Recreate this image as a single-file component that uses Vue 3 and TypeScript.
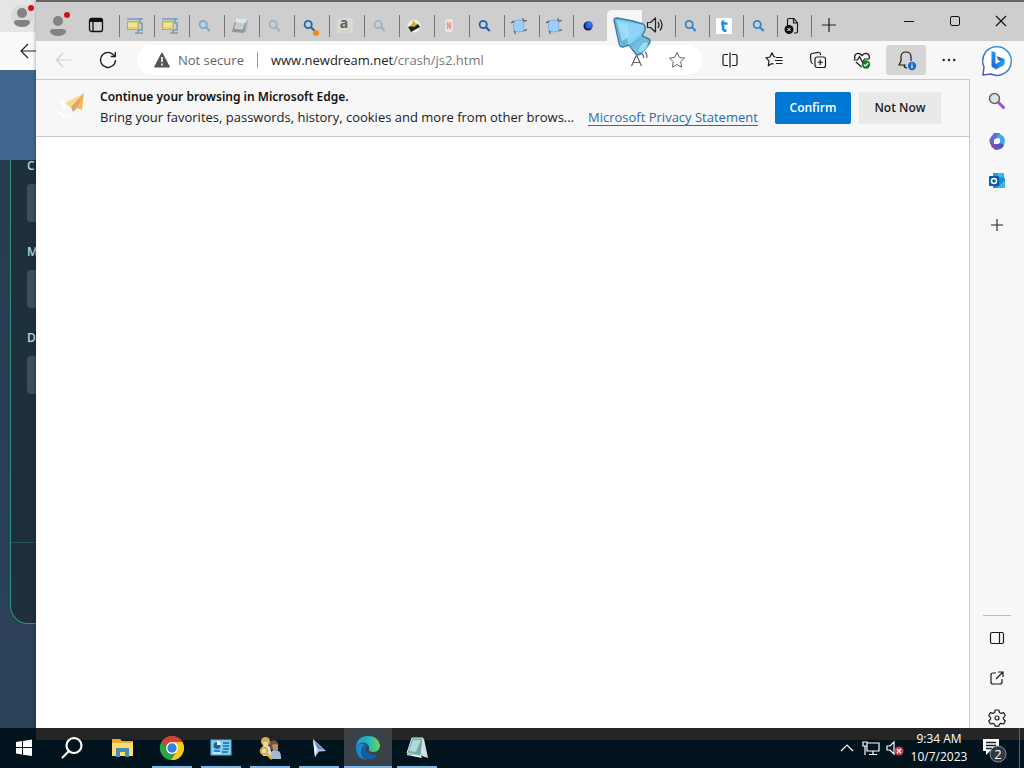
<script setup lang="ts">
interface Tab {
  icon: string
  title: string
  kind?: 'narrow' | 'active'
}

const tabs: Tab[] = [
  { icon: 'zip', title: 'Archive' },
  { icon: 'zip', title: 'Archive' },
  { icon: 'lensPale', title: 'Search' },
  { icon: 'box', title: 'Package' },
  { icon: 'lensGrey', title: 'Search' },
  { icon: 'lensDot', title: 'Search' },
  { icon: 'amazon', title: 'Shop' },
  { icon: 'lensGrey', title: 'Search' },
  { icon: 'lamp', title: 'Lamp' },
  { icon: 'card', title: 'Card' },
  { icon: 'lensDeep', title: 'Search' },
  { icon: 'scroll', title: 'Script' },
  { icon: 'scroll', title: 'Script', kind: 'narrow' },
  { icon: 'orb', title: 'Globe', kind: 'narrow' },
  { icon: 'sound', title: 'Current page', kind: 'active' },
  { icon: 'lensBlue', title: 'Search', kind: 'narrow' },
  { icon: 'letterT', title: 'Social', kind: 'narrow' },
  { icon: 'lensBlue', title: 'Search', kind: 'narrow' },
  { icon: 'fileX', title: 'Missing file', kind: 'narrow' },
]

const lensColors: Record<string, string> = {
  lensPale: '#79aacb',
  lensGrey: '#9db3c5',
  lensDot: '#2467b3',
  lensDeep: '#2160ae',
  lensBlue: '#3b82c6',
}

const fields = [
  { id: 'field-c', label: 'C' },
  { id: 'field-m', label: 'M' },
  { id: 'field-d', label: 'D' },
]
</script>

<template>
  <div class="desktop">
    <section class="back-window" aria-label="Background window">
      <div class="back-tabs">
        <svg class="avatar" width="22" height="24" viewBox="0 0 22 24">
          <circle cx="11" cy="12" r="11" fill="#d9d9d9" />
          <circle cx="11" cy="9" r="5" fill="#858381" />
          <path d="M3 19q0-3 3-3h10q3 0 3 3q-2 4-8 4t-8-4z" fill="#858381" />
        </svg>
        <i class="dot"></i>
      </div>
      <div class="back-toolbar">
        <svg width="18" height="16" viewBox="0 0 18 16" fill="none" stroke="#222" stroke-width="1.2">
          <path d="M8 1L1 8l7 7M1 8h17" />
        </svg>
      </div>
      <div class="back-hero"></div>
      <div class="back-page">
        <form class="back-panel">
          <div v-for="f in fields" :key="f.id" class="field">
            <label :for="f.id">{{ f.label }}</label>
            <input :id="f.id" type="text" />
          </div>
          <div class="panel-foot"></div>
        </form>
      </div>
    </section>

    <main class="edge">
      <header class="tabstrip">
        <button class="profile" aria-label="Profile">
          <svg width="22" height="26" viewBox="0 0 22 26">
            <circle cx="9" cy="12" r="5" fill="#858381" />
            <path d="M1 23q0-3 3-3h10q3 0 3 3q-2 4-8 4t-8-4z" fill="#858381" />
            <circle cx="18" cy="6" r="3" fill="#d0131c" />
          </svg>
        </button>
        <button class="workspaces" aria-label="Tab actions">
          <svg width="16" height="16" viewBox="0 0 16 16" fill="none" stroke="#111" stroke-width="1.3">
            <rect x="1.5" y="1.5" width="13" height="13" rx="2" />
            <path d="M2 3.5h12" stroke-width="3" />
            <path d="M5 4v10" />
          </svg>
        </button>
        <nav class="tabs">
          <button v-for="(t, i) in tabs" :key="i" class="tab" :class="t.kind" :aria-label="t.title">
            <svg v-if="t.icon === 'zip'" width="18" height="18" viewBox="0 0 18 18">
              <path d="M4 2h10v4h2v7h-4v3" fill="none" stroke="#8ba6bf" stroke-width="2" />
              <path d="M1 2h3M13 2h4M9 16h8" stroke="#7c9bb8" stroke-width="1.4" />
              <rect x="1.500" y="4.500" width="11" height="8" fill="#e0d37c" stroke="#ad9d50" stroke-width=".7" />
              <path d="M2.500 6h8v4h-8z" fill="#efe69b" />
            </svg>
            <svg v-else-if="lensColors[t.icon]" width="18" height="18" viewBox="0 0 18 18">
              <g fill="none" :stroke="lensColors[t.icon]" stroke-width="1.8">
                <circle cx="7.2" cy="7.5" r="3.6" />
                <path d="M9.7 10l4 4" stroke-width="2.2" />
              </g>
              <circle v-if="t.icon === 'lensDot'" cx="15" cy="16" r="3" fill="#f28b16" />
            </svg>
            <svg v-else-if="t.icon === 'box'" width="18" height="18" viewBox="0 0 18 18">
              <path d="M5 1l12 1-2 13-14 0z" fill="#a7afb4" />
              <path d="M5 1l12 1-3 4-10-1z" fill="#dfe3e5" />
              <path d="M1 15l3-10 10 1-1 10z" fill="#8e989e" />
              <path d="M6 5l7 1-2 6-7-1z" fill="#c3c8cb" stroke="#edf1f2" stroke-width=".8" />
            </svg>
            <svg v-else-if="t.icon === 'amazon'" width="18" height="18" viewBox="0 0 18 18">
              <rect x="1" y="1" width="16" height="15" rx="2" fill="#d9d9d7" />
              <text x="8" y="11" text-anchor="middle" font-size="14" font-weight="700" fill="#615f5d">a</text>
              <path d="M3 13q6 4 11 0" fill="none" stroke="#d6cf9f" stroke-width="1.2" />
            </svg>
            <svg v-else-if="t.icon === 'lamp'" width="18" height="18" viewBox="0 0 18 18">
              <circle cx="8" cy="9" r="6.5" fill="#eeeeec" />
              <path d="M2 10l10-3 2 3-9 5z" fill="#22211d" />
              <path d="M6 7l1-4 2 3 3 1-4 3-4-1z" fill="#d0ac2c" />
            </svg>
            <svg v-else-if="t.icon === 'card'" width="18" height="18" viewBox="0 0 18 18">
              <rect x="4" y="2" width="8" height="13" rx="2" fill="#ebe4e1" />
              <path d="M6.500 12V5l3 7V5" fill="none" stroke="#e0a193" stroke-width="1.5" />
            </svg>
            <svg v-else-if="t.icon === 'scroll'" width="18" height="18" viewBox="0 0 18 18">
              <path d="M3 4q5-2 10 0-1 5 0 10-5 2-10 0-1-5 0-10z" fill="#9dcffc" stroke="#7ba5cc" stroke-width=".8" />
              <path d="M0 5.500q1 .5 3-1.500M12 1q-.5 2 1 3l3-.5M13 14q2-1.500 3-1M3 14q1.500 1 1 3" fill="none" stroke="#4b5a68" stroke-width="1.200" />
            </svg>
            <svg v-else-if="t.icon === 'orb'" width="18" height="18" viewBox="0 0 18 18">
              <circle cx="8" cy="9" r="4.500" fill="#0b1b4b" />
              <circle cx="9" cy="8.200" r="3.600" fill="#2667e0" />
              <circle cx="10" cy="7" r="1" fill="#4e86ea" />
            </svg>
            <svg v-else-if="t.icon === 'sound'" width="18" height="18" viewBox="0 0 18 18" fill="none" stroke="#222" stroke-width="1.200">
              <path d="M1.500 7.500h3l5-4.500v14l-5-4.500h-3z" stroke-linejoin="round" />
              <path d="M12 7q2 3 0 6M14 4.500q4 5.500 0 11" />
            </svg>
            <svg v-else-if="t.icon === 'letterT'" width="18" height="18" viewBox="0 0 18 18">
              <rect x="0" y="1" width="16" height="16" fill="#fff" />
              <path d="M7 3.500v8q0 2.500 3.500 2M5 6.500h6.500" fill="none" stroke="#1794e8" stroke-width="2.600" />
            </svg>
            <svg v-else width="18" height="18" viewBox="0 0 18 18" fill="none" stroke="#181818" stroke-width="1.200">
              <path d="M3.500 9V3q0-1.500 1.500-1.500h5L13.500 6v8.500q0 1.500-1.500 1.500h-2M9.500 1.500V6h4" />
              <circle cx="5" cy="12.500" r="4.500" fill="#111" stroke="none" />
              <path d="M3.500 11l3 3m0-3l-3 3" stroke="#fff" stroke-width="1" />
            </svg>
          </button>
        </nav>
        <button class="new-tab" aria-label="New tab">
          <svg width="14" height="14" viewBox="0 0 14 14" stroke="#222" stroke-width="1.200"><path d="M7 0v14M0 7h14" /></svg>
        </button>
        <div class="window-controls">
          <button aria-label="Minimize"><svg width="10" height="10" viewBox="0 0 10 10" stroke="#111"><path d="M0 5.500h10" /></svg></button>
          <button aria-label="Maximize"><svg width="10" height="10" viewBox="0 0 10 10" fill="none" stroke="#111"><rect x=".5" y=".5" width="9" height="9" rx="1.500" /></svg></button>
          <button aria-label="Close"><svg width="10" height="10" viewBox="0 0 10 10" stroke="#111" stroke-width="1.200"><path d="M0 0l10 10M10 0L0 10" /></svg></button>
        </div>
      </header>

      <div class="toolbar">
        <button class="tool" aria-label="Back" disabled>
          <svg width="18" height="16" viewBox="0 0 18 16" fill="none" stroke="#cfcfcf" stroke-width="1.200"><path d="M8 1L1.500 8 8 15M1.500 8H17" /></svg>
        </button>
        <button class="tool" aria-label="Refresh">
          <svg width="18" height="18" viewBox="0 0 18 18" fill="none" stroke="#1c1c1c" stroke-width="1.300"><path d="M16.500 9a7.500 7.500 0 1 1-2.700-5.800L16 5M16.300 1v4.500h-4.500" /></svg>
        </button>
        <div class="address">
          <svg class="warn" width="16" height="16" viewBox="0 0 16 16">
            <path d="M8 .8L15.500 15H.5z" fill="#555" stroke="#555" stroke-linejoin="round" />
            <path d="M8 5v5M8 11.500v2" stroke="#fff" stroke-width="1.600" />
          </svg>
          <span class="insecure">Not secure</span>
          <span class="url">www.newdream.net<span>/crash/js2.html</span></span>
          <button class="tool read" aria-label="Read aloud">
            <svg width="18" height="18" viewBox="0 0 18 18" fill="none" stroke="#606060" stroke-width="1.200"><path d="M1.500 15L6.500 4l5 11M3.300 11.500h6.400M12 3q2 1 1.500 4M15 1q2.500 2 1.700 6" /></svg>
          </button>
          <button class="tool fav" aria-label="Add to favorites">
            <svg width="18" height="18" viewBox="0 0 18 18" fill="none" stroke="#666" stroke-linejoin="round"><path d="M9 1.500l2.300 4.900 5.200.7-3.800 3.700.9 5.300L9 13.500l-4.600 2.600.9-5.300L1.500 7.100l5.200-.7z" /></svg>
          </button>
        </div>
        <div class="actions">
          <button class="tool" aria-label="Split screen">
            <svg width="18" height="18" viewBox="0 0 18 18" fill="none" stroke="#1b1b1b" stroke-width="1.200"><path d="M7 3.500H3.500q-1.500 0-1.500 1.500v8q0 1.500 1.500 1.500H7M11 3.500h3.500q1.500 0 1.500 1.500v8q0 1.500-1.500 1.500H11M9 1.500v15" /></svg>
          </button>
          <button class="tool" aria-label="Favorites">
            <svg width="18" height="18" viewBox="0 0 18 18" fill="none" stroke="#1b1b1b" stroke-width="1.200" stroke-linejoin="round"><path d="M10.500 6L9 5.700 7 1.800 5 6l-4 .8 3 3-.7 5L7 12.500l1.500.8M11 6.500h6.500M10 9.500h7.500M11 12.500h6.500" /></svg>
          </button>
          <button class="tool" aria-label="Collections">
            <svg width="18" height="18" viewBox="0 0 18 18" fill="none" stroke="#1b1b1b" stroke-width="1.200"><rect x="6" y="6" width="10.500" height="10.500" rx="2" /><path d="M11.250 8.500v5.500M8.500 11.250H14M4 12.500q-1.800-.2-2-1.800L1.500 5Q1.300 3 3 2.500L9 1.300Q11 1 11.500 3v1" /></svg>
          </button>
          <button class="tool" aria-label="Browser essentials">
            <svg width="18" height="18" viewBox="0 0 18 18" fill="none" stroke="#1b1b1b" stroke-width="1.200"><path d="M2 8Q.8 4.800 3 3q3-2 6 1.500Q12 1 15 3q2.200 2 1 5M.5 9h4L6.500 5.500l3 6L11.500 8h5M3 11l5.500 5" /><circle cx="13" cy="13.500" r="4.200" fill="#147d1a" stroke="none" /><path d="M10.800 13.500l1.600 1.500 2.800-3" stroke="#fff" /></svg>
          </button>
          <button class="tool bell" aria-label="Notifications">
            <svg width="20" height="22" viewBox="0 0 20 22" fill="none" stroke="#1b1b1b" stroke-width="1.200"><path d="M10 16H3l2-4V8q0-5 5-5t5 5v4M8 16q0 3 3 3" /><circle cx="16" cy="17" r="4.200" fill="#156fc4" stroke="none" /><path d="M16 14.500v1M16 16.200v3" stroke="#fff" /></svg>
          </button>
          <button class="tool more" aria-label="Settings and more">
            <svg width="14" height="4" viewBox="0 0 14 4" fill="#222"><circle cx="1.700" cy="2" r="1.200" /><circle cx="7" cy="2" r="1.200" /><circle cx="12.300" cy="2" r="1.200" /></svg>
          </button>
        </div>
      </div>

      <div class="body">
        <section class="infobar">
          <svg class="plane" width="32" height="32" viewBox="0 0 32 32">
            <path d="M5 11q3 2 3 6M4 23q5 5 10 2" fill="none" stroke="#fff" stroke-width="3" stroke-linecap="round" />
            <path d="M28 3L9 13l6 5z" fill="#ffd78c" />
            <path d="M28 3l-2 17-8-3z" fill="#f8bb58" />
            <path d="M28 3L15 17l2 5 4-4z" fill="#dda56a" />
          </svg>
          <div class="message">
            <strong>Continue your browsing in Microsoft Edge.</strong>
            <p>Bring your favorites, passwords, history, cookies and more from other brows...</p>
          </div>
          <a href="#privacy">Microsoft Privacy Statement</a>
          <button class="confirm">Confirm</button>
          <button class="later">Not Now</button>
        </section>
        <article class="page"></article>
      </div>

      <aside class="sidebar">
        <button aria-label="Bing chat" class="bing">
          <svg width="32" height="34" viewBox="0 0 32 34">
            <defs>
              <linearGradient id="ring" x1="0" y1="1" x2="1" y2="0"><stop stop-color="#4651bd" /><stop offset="1" stop-color="#2ca6e5" /></linearGradient>
              <linearGradient id="bee" x1="0" y1="0" x2="1" y2="1"><stop stop-color="#17a4ee" /><stop offset=".5" stop-color="#2267da" /><stop offset="1" stop-color="#36c7e8" /></linearGradient>
            </defs>
            <path d="M2 31L3 23A14.300 14.300 0 1 1 10 30z" fill="#fff" stroke="url(#ring)" stroke-width="1.500" />
            <path d="M10.500 7l4 1.500V20l5-2.500-2.500-1.500-1.500-4 8 3q1 4-1 6.500l-7.500 4-4.500-3z" fill="url(#bee)" />
          </svg>
        </button>
        <button aria-label="Search">
          <svg width="18" height="18" viewBox="0 0 18 18"><path d="M10.500 10.500l5 5" stroke="#9b50d8" stroke-width="3" stroke-linecap="round" /><circle cx="6.500" cy="6.500" r="5" fill="#dce3e6" stroke="#636568" stroke-width="1.500" /></svg>
        </button>
        <button aria-label="Microsoft 365">
          <svg width="18" height="18" viewBox="0 0 18 18"><path d="M6 1h6l-2 5-4 2v5l-4-2Q1 9 1.500 7z" fill="#626dcb" /><path d="M10 1l5 3q2 2 2 5l-1 4-4-2V7L9 5z" fill="#42a8ee" /><path d="M2 10l4 2 4 0 2-1 4 2q-1 3-5 4.500-3 1-5-.5-3-2-4-6z" fill="#7b4ab5" /><path d="M12 11l4 2-4 4-3-3z" fill="#3c5fc4" /><circle cx="9" cy="9" r="2.800" fill="#f2f4fb" /></svg>
        </button>
        <button aria-label="Outlook">
          <svg width="18" height="18" viewBox="0 0 18 18"><path d="M5 1h11v7H5z" fill="#249bdc" /><path d="M10 1h6v4h-6z" fill="#36bcec" /><path d="M5 8l12-2v9q0 1-1 1H5z" fill="#168bd2" /><path d="M9 16l8-8v8z" fill="#35b9eb" /><rect x="1" y="4" width="10" height="10" rx="1" fill="#075baa" /><circle cx="6" cy="9" r="2.500" fill="none" stroke="#fff" stroke-width="1.500" /></svg>
        </button>
        <button aria-label="Customize" class="add">
          <svg width="12" height="12" viewBox="0 0 12 12" stroke="#222" stroke-width="1.100"><path d="M6 0v12M0 6h12" /></svg>
        </button>
        <div class="side-bottom">
          <button aria-label="Hide sidebar"><svg width="16" height="16" viewBox="0 0 16 16" fill="none" stroke="#1b1b1b" stroke-width="1.200"><rect x="1.500" y="2.500" width="13" height="11" rx="1.500" /><path d="M10.500 3v10" /></svg></button>
          <button aria-label="Open link externally"><svg width="16" height="16" viewBox="0 0 16 16" fill="none" stroke="#1b1b1b" stroke-width="1.200"><path d="M7 3H4Q2 3 2 5v7q0 2 2 2h7q2 0 2-2V9M9 2h5v5M14 2L7 9" /></svg></button>
          <button aria-label="Sidebar settings"><svg width="18" height="18" viewBox="0 0 18 18" fill="none" stroke="#1b1b1b" stroke-width="1.200" stroke-linejoin="round"><path d="M7.200 1h3.600l.7 2.500 1.500.9 2.600-.7 1.700 3-1.900 1.900v1.500l1.900 1.900-1.700 3-2.600-.7-1.500.9-.7 2H7.200l-.7-2-1.500-.9-2.600.7-1.700-3 1.900-1.900V8.600L.7 6.700l1.700-3 2.600.7 1.500-.9z" /><circle cx="9" cy="9" r="2" /></svg></button>
        </div>
      </aside>
      <svg class="cursor" width="42" height="42" viewBox="0 0 42 42">
        <defs>
          <linearGradient id="ice" x1="0" y1="0" x2="1" y2="1"><stop stop-color="#5fb9de" /><stop offset=".5" stop-color="#8fd6fa" /><stop offset="1" stop-color="#429fcb" /></linearGradient>
          <linearGradient id="stem" x1="0" y1="0" x2="1" y2="1"><stop stop-color="#4ba6cd" /><stop offset="1" stop-color="#a5e2f4" /></linearGradient>
        </defs>
        <path d="M2 4Q2 2 5 2q14 2 26 6 3 2 2 6l-3 6 7 3q2 2 0 5l-8 10q-3 2-6-1l-6-8-6 2q-3 0-4-4z" fill="url(#ice)" stroke="#3f7ea2" stroke-width="1.400" stroke-linejoin="round" />
        <path d="M3 4l5 22 3 5 5-3-1-8z" fill="#4b9fc4" opacity=".6" />
        <path d="M4 4l12 5 1 12-7 4z" fill="#a8e2f7" opacity=".8" />
        <path d="M6 4l24 6-2 8-11 4-1-12z" fill="#91d2fc" />
        <path d="M17 29l11-8 9 4-11 13z" fill="url(#stem)" />
        <ellipse cx="31" cy="31" rx="7" ry="3.500" transform="rotate(-51 31 31)" fill="#9adcef" stroke="#4f9fc2" stroke-width=".8" />
      </svg>
    </main>

    <footer class="taskbar">
      <button class="start" aria-label="Start"><svg width="18" height="18" viewBox="0 0 18 18" fill="#fff"><path d="M1 3l6-1v6H1zM8 2l9-1.500V8H8zM1 9h6v6.500l-6-1zM8 9h9v8l-9-1.300z" /></svg></button>
      <button aria-label="Search"><svg width="24" height="24" viewBox="0 0 24 24" fill="none" stroke="#fff" stroke-width="2.200"><circle cx="14" cy="9.500" r="7.500" /><path d="M9 15l-7 7" /></svg></button>
      <div class="apps">
        <button class="app" aria-label="File Explorer"><svg width="24" height="22" viewBox="0 0 24 22"><path d="M1 2h8l2 2h11v14H1z" fill="#e8af36" /><path d="M1 6h21v13H1z" fill="#ffda71" /><path d="M5 11h13v9h-4v-5H9v5H5z" fill="#438eb4" /><path d="M1 2h7v3H1z" fill="#f3a91e" /></svg></button>
        <button class="app open" aria-label="Chrome"><svg width="26" height="26" viewBox="0 0 26 26"><circle cx="13" cy="13" r="12" fill="#2a9b45" /><path d="M2.600 7A12 12 0 0 1 23.400 7H13a6 6 0 0 0-5.300 3.500z" fill="#de3e31" /><path d="M2.600 7l5.200 9q2 3 6 3l-1.800 6A12 12 0 0 1 2.600 7z" fill="#2ca24a" /><path d="M13 7h10.400A12 12 0 0 1 12 25l6-9q2-5-5-9z" fill="#fbc91e" /><circle cx="13" cy="13" r="6" fill="#fff" /><circle cx="13" cy="13" r="4.700" fill="#397de1" /></svg></button>
        <button class="app open" aria-label="Control Panel"><svg width="22" height="18" viewBox="0 0 22 18"><rect x="1" y="1" width="20" height="15" fill="#86ceef" stroke="#5fb3dc" /><circle cx="7" cy="6.500" r="3.500" fill="#1c6598" /><path d="M7 6V2a4 4 0 0 1 4 4z" fill="#f4fbff" /><path d="M13 4h6M13 7h6M13 10h6M4 12h6M12 13h6" stroke="#1769a2" stroke-width="1.500" /><path d="M3 14h8" stroke="#fff" /></svg></button>
        <button class="app open" aria-label="Users"><svg width="24" height="24" viewBox="0 0 24 24"><path d="M12 23q-1-9 5-9t6 7v2z" fill="#a6b9d2" /><circle cx="15.500" cy="9" r="4.800" fill="#735441" /><path d="M14 9q4-2 6 0v5h-5z" fill="#b98a64" /><path d="M3 14q1-5 5-5t5 6v5H5z" fill="#d5e1dd" /><circle cx="7.500" cy="5.500" r="4.500" fill="#cfae63" /><path d="M5 6h5v6H6z" fill="#eed79d" /><circle cx="6" cy="15" r="3.300" fill="none" stroke="#dfad26" stroke-width="2" /><path d="M8 17l6 6" stroke="#e4b137" stroke-width="2.500" /></svg></button>
        <button class="app open" aria-label="Cursor tool"><svg width="18" height="20" viewBox="0 0 18 20"><path d="M3 1l13 12-7 .5L5 19z" fill="#a7c6ed" /><path d="M3 1l4 10-2 8z" fill="#eef7ff" /><path d="M4 3l10 9-6-1z" fill="#6b8cb9" /></svg></button>
        <button class="app open current" aria-label="Microsoft Edge"><svg width="26" height="26" viewBox="0 0 26 26"><defs><linearGradient id="wave"><stop stop-color="#1999d2" /><stop offset=".55" stop-color="#24b8bc" /><stop offset="1" stop-color="#73d84b" /></linearGradient></defs><path d="M1 12Q2 1 13 1q10 0 12 9 0 6-6 7-6 0-5-3 1-2-2-5-5-4-11 3z" fill="url(#wave)" /><path d="M1 12q4-5 9-3-4 3-4 8 0 5 6 8Q1 24 1 12z" fill="#168bd2" /><path d="M10 9q-5 3-3 10 2 6 10 5 4-1 6-5-7 3-11-2-3-4 1-7z" fill="#145ea7" /></svg></button>
        <button class="app open" aria-label="Notepad"><svg width="24" height="24" viewBox="0 0 24 24"><path d="M8 2l11 1 4 19-6-2z" fill="#d8dfdb" /><path d="M7 2h11l-2 18-14-3z" fill="#6fa9ad" stroke="#d7ebe8" /><path d="M8 4h8l-5 12-7-1z" fill="#b0d8d7" /><path d="M2 18l14 2 1 2-15-3z" fill="#fff" /></svg></button>
      </div>
      <div class="tray">
        <button aria-label="Show hidden icons"><svg width="14" height="8" viewBox="0 0 14 8" fill="none" stroke="#fff" stroke-width="1.200"><path d="M1 7l6-6 6 6" /></svg></button>
        <button aria-label="Network"><svg width="18" height="16" viewBox="0 0 18 16" fill="none" stroke="#fff" stroke-width="1.200"><path d="M5 3h12v8H5zM11 11v3M7 14.500h8M1 2h4v4H1zM3 6v9" /></svg></button>
        <button aria-label="Sound muted"><svg width="18" height="18" viewBox="0 0 18 18" fill="none" stroke="#fff" stroke-width="1.200"><path d="M1 7h3l4-4v12l-4-4H1z" /><circle cx="13" cy="12" r="4.500" fill="#cc3f4a" stroke="none" /><path d="M11 10l4 4m0-4l-4 4" /></svg></button>
        <button class="clock"><span>9:34 AM</span><span>10/7/2023</span></button>
        <button class="notices" aria-label="2 notifications"><svg width="28" height="28" viewBox="0 0 28 28"><path d="M3 5h16v12H10l-4 4v-4H3z" fill="#fff" /><path d="M6 8.500h10M6 11.500h10M6 14.500h6" stroke="#192127" stroke-width="1.300" /><circle cx="18" cy="20" r="8" fill="#303940" stroke="#879096" /><text x="18" y="25" text-anchor="middle" font-size="13" fill="#fff">2</text></svg></button>
        <i class="peek"></i>
      </div>
    </footer>
  </div>
</template>

<style>
body { margin: 0; overflow: hidden; }
</style>

<style scoped>
* { box-sizing: border-box; }
.desktop {
  position: relative; height: 100vh; overflow: hidden; background: #2a3f55;
  font-family: "Open Sans", "Noto Sans", sans-serif; font-size: 13px; color: #1b1b1b;
}
button { font: inherit; color: inherit; border: 0; padding: 0; background: none; display: flex; align-items: center; justify-content: center; flex: none; }
svg { display: block; flex: none; overflow: visible; }
.back-window { position: absolute; inset: 0 0 40px; display: flex; flex-direction: column; }
.back-tabs { position: relative; height: 32px; flex: none; background: #e5e5e5; padding: 4px 0 0 11px; }
.dot { position: absolute; left: 28px; top: 5px; width: 6px; height: 6px; border-radius: 50%; background: #d0131c; }
.back-toolbar { height: 38px; flex: none; background: #fafafa; padding: 11px 0 0 20px; }
.back-hero { height: 90px; flex: none; background: #41688f; }
.back-page { flex: 1; padding: 0 10px 104px; background: linear-gradient(#273b50, #2d435b); }
.back-panel { height: 100%; border: 1px solid #28947f; border-top: 0; border-radius: 0 0 18px 18px; background: #1f303d; display: flex; flex-direction: column; }
.field { display: flex; flex-direction: column; gap: 12px; padding-left: 16px; margin-bottom: 24px; }
.field label { font-size: 12px; line-height: 12px; font-weight: 600; color: #c8d3d9; }
.field input { width: 200px; height: 38px; border: 0; border-radius: 4px; background: #414e58; }
.panel-foot { margin-top: auto; height: 81px; border-top: 1px solid #25545a; }

.edge {
  position: absolute; inset: 0 0 40px 36px; display: grid; grid-template: 41px 39px minmax(0, 1fr) / minmax(0, 1fr) 54px;
  background: #f7f7f7; box-shadow: 0 0 4px #0006;
}
.tabstrip { grid-column: 1 / 3; display: flex; border-top: 2px solid #656565; background: #cecece; }
.profile { width: 48px; }
.workspaces { width: 24px; padding-top: 6px; }
.tabs { display: flex; margin-left: 11px; border-right: 1px solid #757575; align-self: flex-start; height: 22px; margin-top: 13px; }
.tab { width: 35px; height: 22px; border-left: 1px solid #757575; padding-right: 4px; }
.tab.narrow { width: 34px; }
.tab.active { width: 68px; height: 32px; margin-top: -5px; border: 0; padding: 0 0 5px 28px; background: linear-gradient(90deg, #f7f7f7 35px, transparent 35px); border-radius: 5px 0 0 0; }
.new-tab { width: 34px; padding-top: 7px; }
.window-controls { display: flex; height: 38px; margin-left: auto; }
.window-controls button { width: 46px; }

.toolbar { display: flex; align-items: center; padding-left: 6px; border-bottom: 1px solid #c9c9c9; }
.tool { width: 44px; height: 30px; }
.address { flex: 1; height: 30px; border-radius: 15px; background: #fff; display: flex; align-items: center; margin-left: 7px; padding-left: 17px; min-width: 0; }
.insecure { margin-left: 8px; padding-right: 13px; color: #666; border-right: 1px solid #999; line-height: 16px; white-space: nowrap; }
.url { margin-left: 13px; white-space: nowrap; color: #222; }
.url span { color: #777; }
.read { margin-left: auto; width: 26px; }
.fav { width: 50px; }
.actions { display: flex; margin-left: 6px; }
.bell { width: 40px; margin: 0 2px; border-radius: 3px; background: #d5d5d5; }
.more { width: 42px; }

.body { min-width: 0; min-height: 0; border-right: 1px solid #c9c9c9; display: flex; flex-direction: column; }
.infobar { flex: none; display: flex; align-items: center; padding: 7px 28px 9px 20px; background: #f7f7f7; border-bottom: 1px solid #c9c9c9; }
.plane { margin-bottom: 2px; }
.message { width: 480px; margin-left: 12px; white-space: nowrap; }
.message strong { display: block; font-family: "Noto Sans", "Open Sans", sans-serif; font-size: 12px; font-weight: 600; line-height: 20px; color: #111; }
.message p { margin: 0; line-height: 20px; }
.infobar a { align-self: flex-end; margin-left: 8px; line-height: 20px; color: #2b6baa; white-space: nowrap; text-underline-offset: 3px; }
.confirm, .later { height: 32px; border-radius: 2px; font-size: 12px; font-weight: 600; margin-top: 1px; }
.confirm { width: 76px; margin-left: auto; background: #0078d4; color: #fff; }
.later { width: 82px; margin-left: 8px; background: #e9e9e9; }
.page { flex: 1; background: #fff; }

.sidebar { grid-column: 2; grid-row: 2 / 4; display: flex; flex-direction: column; align-items: center; }
.sidebar button { width: 40px; height: 40px; }
.sidebar .add { margin-top: 4px; }
.side-bottom { margin-top: auto; margin-bottom: -10px; border-top: 1px solid #bdbdbd; padding-top: 2px; width: 28px; display: flex; flex-direction: column; align-items: center; }
.cursor { position: absolute; left: 576px; top: 16px; pointer-events: none; }

.taskbar {
  position: absolute; inset: auto 0 0; height: 40px; display: flex; color: #fff;
  background: linear-gradient(#262526 12px, #01131d 12px);
}
.taskbar > button { width: 48px; }
.taskbar > .start { background: #01131d; width: 36px; padding-left: 12px; margin-right: 12px; }
.apps { display: flex; gap: 1px; margin-left: 3px; }
.app { width: 48px; border-bottom: 2px solid transparent; padding-top: 2px; }
.open { background: linear-gradient(#7db7e6, #7db7e6) 50% 100% / 40px 2px no-repeat border-box; }
.current { background: linear-gradient(#7db7e6, #7db7e6) 50% 100% / 48px 2px no-repeat border-box, #3a4147; }
.tray { margin-left: auto; display: flex; }
.tray button { width: 24px; }
.tray .clock { width: 64px; flex-direction: column; font-size: 12px; line-height: 18px; white-space: nowrap; }
.tray .notices { width: 48px; padding: 0 2px 0 0; }
.peek { width: 5px; border-left: 1px solid #59646b; }
</style>
